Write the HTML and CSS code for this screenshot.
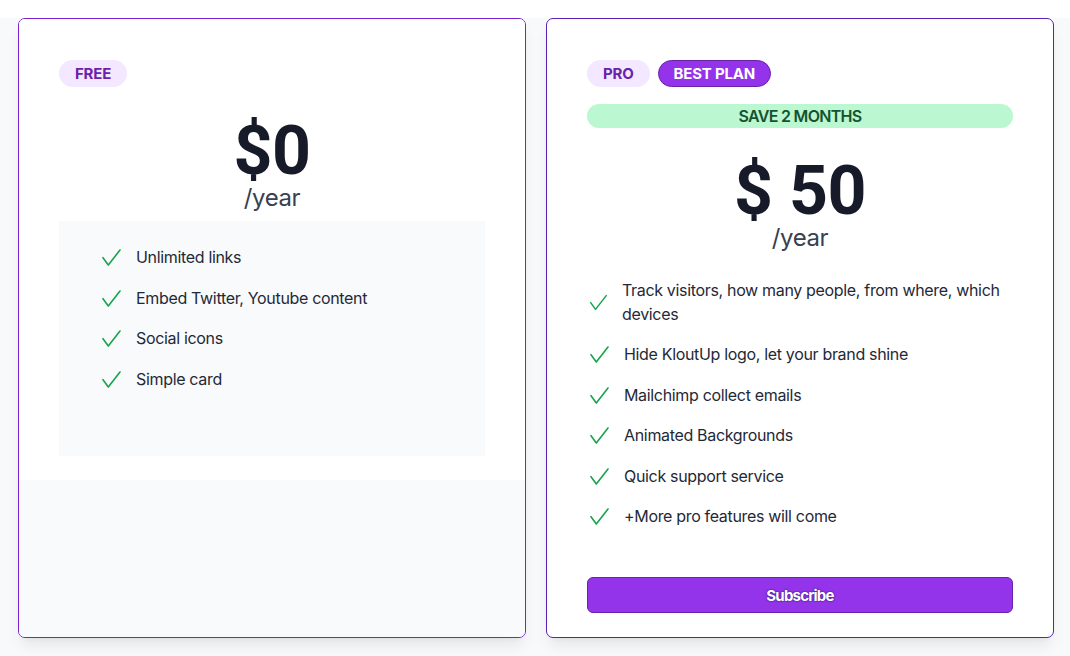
FILE: index.html
```html
<!DOCTYPE html>
<html lang="en">
<head>
<meta charset="utf-8">
<title>Pricing</title>
<link rel="stylesheet" href="styles.css">
</head>
<body>
<div class="top-strip"></div>
<main class="pricing">
  <section class="card card-free">
    <div class="card-body">
      <div class="badges">
        <span class="badge badge-light">FREE</span>
      </div>
      <div class="price price-free">$0</div>
      <div class="per">/year</div>
      <div class="features-box">
        <ul class="features">
          <li><svg class="check" viewBox="0 0 24 24"><path d="M4 12.7 L9.3 20 L21 5"/></svg><span>Unlimited links</span></li>
          <li><svg class="check" viewBox="0 0 24 24"><path d="M4 12.7 L9.3 20 L21 5"/></svg><span>Embed Twitter, Youtube content</span></li>
          <li><svg class="check" viewBox="0 0 24 24"><path d="M4 12.7 L9.3 20 L21 5"/></svg><span>Social icons</span></li>
          <li><svg class="check" viewBox="0 0 24 24"><path d="M4 12.7 L9.3 20 L21 5"/></svg><span>Simple card</span></li>
        </ul>
      </div>
    </div>
    <div class="card-footer"></div>
  </section>
  <section class="card card-pro">
    <div class="badges">
      <span class="badge badge-light">PRO</span>
      <span class="badge badge-strong">BEST PLAN</span>
    </div>
    <div class="save">SAVE 2 MONTHS</div>
    <div class="price price-pro">$ 50</div>
    <div class="per">/year</div>
    <ul class="features features-pro">
      <li><svg class="check" viewBox="0 0 24 24"><path d="M4 12.7 L9.3 20 L21 5"/></svg><span>Track visitors, how many people, from where, which devices</span></li>
      <li><svg class="check" viewBox="0 0 24 24"><path d="M4 12.7 L9.3 20 L21 5"/></svg><span>Hide KloutUp logo, let your brand shine</span></li>
      <li><svg class="check" viewBox="0 0 24 24"><path d="M4 12.7 L9.3 20 L21 5"/></svg><span>Mailchimp collect emails</span></li>
      <li><svg class="check" viewBox="0 0 24 24"><path d="M4 12.7 L9.3 20 L21 5"/></svg><span>Animated Backgrounds</span></li>
      <li><svg class="check" viewBox="0 0 24 24"><path d="M4 12.7 L9.3 20 L21 5"/></svg><span>Quick support service</span></li>
      <li><svg class="check" viewBox="0 0 24 24"><path d="M4 12.7 L9.3 20 L21 5"/></svg><span>+More pro features will come</span></li>
    </ul>
    <button class="subscribe" type="button">Subscribe</button>
  </section>
</main>
</body>
</html>
```
FILE: styles.css
```css
* { box-sizing: border-box; }
html, body { margin: 0; padding: 0; }
body {
  background: #ffffff;
  font-family: Inter, "Noto Sans", sans-serif;
  color: #1f2937;
  height: 656px;
  overflow: hidden;
}
.top-strip { height: 18px; background: #ffffff; }
.pricing {
  background: #f8f9fb;
  display: grid;
  grid-template-columns: 508px 508px;
  column-gap: 20px;
  padding: 0 18px 30px;
  align-items: stretch;
}
.card {
  border-radius: 7px;
  background: #ffffff;
  box-shadow: 0 10px 15px -3px rgba(0,0,0,0.08), 0 4px 6px -4px rgba(0,0,0,0.06);
  display: flex;
  flex-direction: column;
  overflow: hidden;
  height: 620px;
}
.card-free { border: 1px solid #7e22ce; }
.card-pro { border: 1px solid #5b21b6; padding: 41px 40px 24px; }
.card-body { padding: 41px 40px 24px; background: #ffffff; }
.card-footer { flex: 1; background: #f8fafc; }
.badges { display: flex; gap: 8px; }
.badge {
  display: inline-flex;
  align-items: center;
  height: 27px;
  padding: 0 16px;
  border-radius: 999px;
  font-size: 15px;
  font-weight: 700;
  letter-spacing: -0.2px;
}
.badge-light { background: #f3e8ff; color: #6b21a8; }
.badge-strong { background: #9333ea; color: #ffffff; border: 1px solid #6b21a8; padding: 0 15px; }
.save {
  margin-top: 17px;
  height: 24px;
  border-radius: 999px;
  background: #bbf7d0;
  color: #14532d;
  font-size: 16px;
  font-weight: 600;
  letter-spacing: -0.7px;
  display: flex;
  align-items: center;
  justify-content: center;
}
.price {
  text-align: center;
  font-family: Roboto, Inter, sans-serif;
  font-size: 68px;
  line-height: 67px;
  font-weight: 700;
  color: #171b29;
  letter-spacing: -0.5px;
}
.price-free { margin-top: 31px; }
.price-pro { margin-top: 30px; }
.per {
  text-align: center;
  font-size: 24px;
  line-height: 26px;
  color: #374151;
  letter-spacing: -0.4px;
}
.features-box {
  margin-top: 10px;
  background: #f8fafc;
  padding: 24px 0 65px 40px;
}
.features {
  list-style: none;
  margin: 0;
  padding: 0;
  display: flex;
  flex-direction: column;
  gap: 16.5px;
}
.features li {
  display: flex;
  align-items: center;
  font-size: 16px;
  line-height: 24px;
  letter-spacing: -0.33px;
  color: #1f2937;
}
.check {
  width: 24px;
  height: 24px;
  margin-right: 13px;
  flex-shrink: 1;
  min-width: 22px;
}
.check path {
  fill: none;
  stroke: #16a34a;
  stroke-width: 1.6;
  stroke-linecap: round;
  stroke-linejoin: round;
}
.features-pro { margin-top: 27px; gap: 16.4px; }
.subscribe {
  margin-top: auto;
  height: 36px;
  width: 100%;
  border-radius: 6px;
  border: 1px solid #6b21a8;
  background: #9333ea;
  color: #ffffff;
  font-family: Inter, "Noto Sans", sans-serif;
  font-size: 15px;
  font-weight: 700;
  letter-spacing: -0.8px;
  text-shadow: 0 0 2px #4c1d95, 0 0 1px #4c1d95, 0 0 1px #4c1d95;
  cursor: pointer;
}
```
